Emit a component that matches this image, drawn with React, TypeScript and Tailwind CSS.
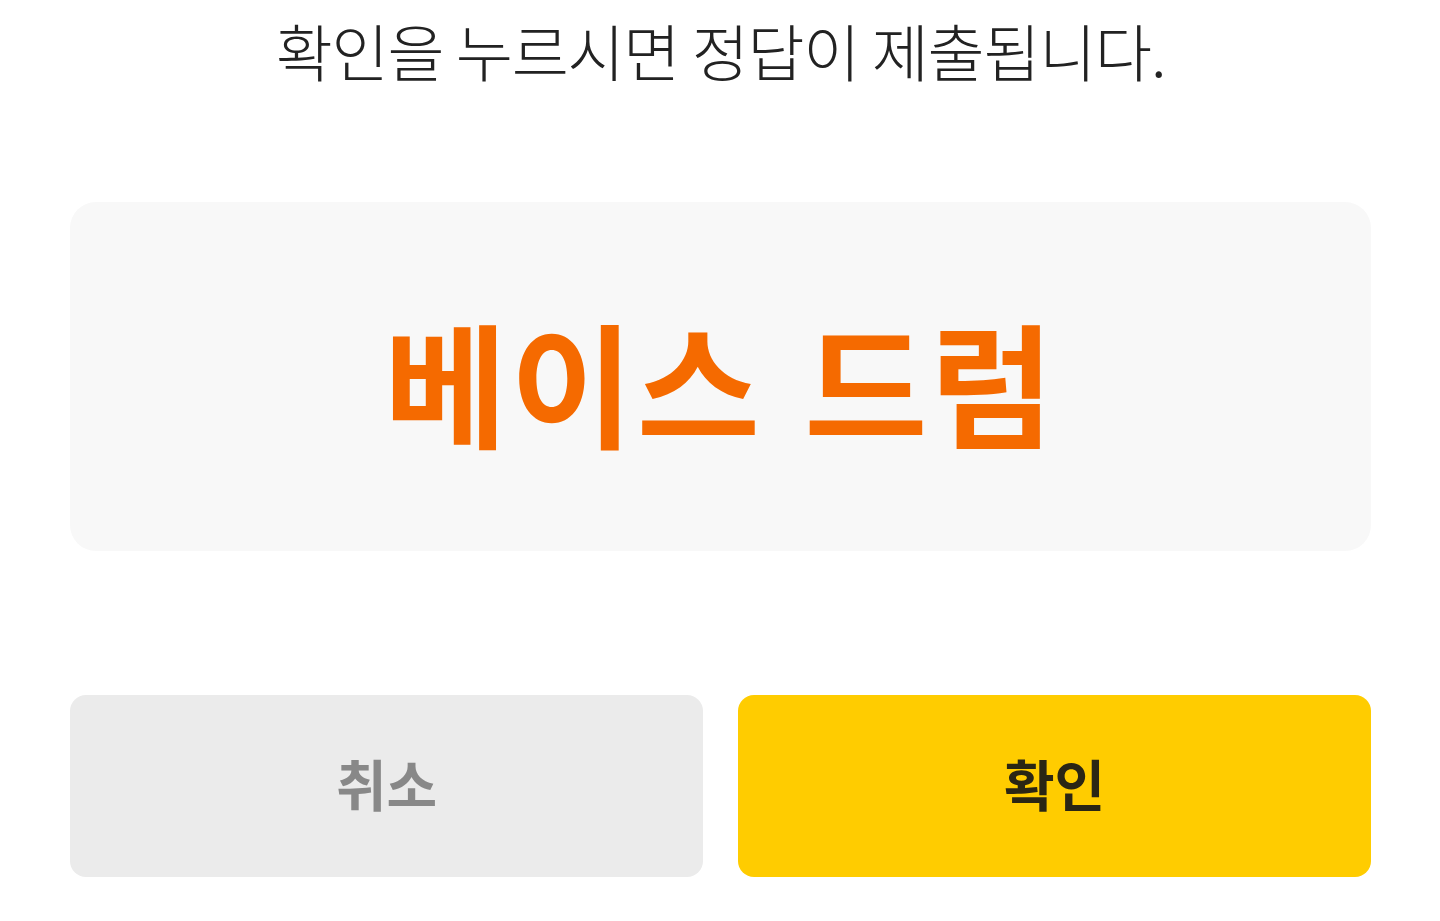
export default function App() {
  return (
    <div
      className="w-[1440px] h-[921px] bg-white flex flex-col pl-[70px] pr-[69px] overflow-hidden"
      style={{ fontFamily: '"Noto Sans CJK KR", "Noto Sans", sans-serif' }}
    >
      <div className="h-[100px] flex items-center justify-center text-[62px] font-light text-[#222222] leading-none tracking-[-1.2px]">
        확인을 누르시면 정답이 제출됩니다.
      </div>
      <div className="mt-[102px] h-[349px] rounded-[26px] bg-[#f8f8f8] flex items-center justify-center pt-[6px]">
        <span className="text-[134px] font-bold text-[#f56a00] leading-none tracking-[3px] [word-spacing:8px]">베이스 드럼</span>
      </div>
      <div className="mt-[144px] flex gap-[35px]">
        <button className="flex-1 h-[182px] rounded-[16px] bg-[#ebebeb] text-[#888888] text-[55px] font-bold flex items-center justify-center leading-none pb-[8px]">
          취소
        </button>
        <button className="flex-1 h-[182px] rounded-[16px] bg-[#ffcc00] text-[#2a2614] text-[55px] font-bold flex items-center justify-center leading-none pb-[8px]">
          확인
        </button>
      </div>
    </div>
  );
}
